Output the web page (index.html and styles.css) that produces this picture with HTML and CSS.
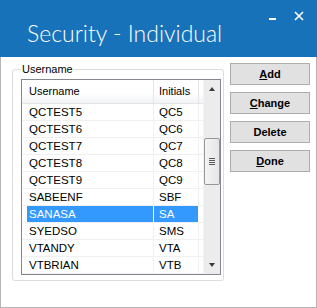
FILE: index.html
```html
<!DOCTYPE html>
<html lang="en">
<head>
    <meta charset="UTF-8">
    <title>Security - Individual</title>
    <link rel="stylesheet" href="styles.css">
</head>
<body>
    <div class="window">
        <div class="titlebar">
            <div class="title">Security - Individual</div>
            <div class="controls">
                <span class="minimize"></span>
                <svg class="close" width="10" height="10" viewBox="0 0 10 10">
                    <path d="M1 1 L9 9 M9 1 L1 9" stroke="#fff" stroke-width="1.6" fill="none"/>
                </svg>
            </div>
        </div>

        <div class="main">
            <fieldset class="group">
                <legend>Username</legend>
                <div class="listview">
                    <div class="list">
                        <div class="row header">
                            <div class="cell">Username</div>
                            <div class="cell">Initials</div>
                        </div>
                        <div class="row"><div class="cell">QCTEST5</div><div class="cell">QC5</div></div>
                        <div class="row"><div class="cell">QCTEST6</div><div class="cell">QC6</div></div>
                        <div class="row"><div class="cell">QCTEST7</div><div class="cell">QC7</div></div>
                        <div class="row"><div class="cell">QCTEST8</div><div class="cell">QC8</div></div>
                        <div class="row"><div class="cell">QCTEST9</div><div class="cell">QC9</div></div>
                        <div class="row"><div class="cell">SABEENF</div><div class="cell">SBF</div></div>
                        <div class="row selected"><div class="cell">SANASA</div><div class="cell">SA</div></div>
                        <div class="row"><div class="cell">SYEDSO</div><div class="cell">SMS</div></div>
                        <div class="row"><div class="cell">VTANDY</div><div class="cell">VTA</div></div>
                        <div class="row"><div class="cell">VTBRIAN</div><div class="cell">VTB</div></div>
                    </div>
                    <div class="scrollbar">
                        <span class="arrow up"></span>
                        <div class="track">
                            <div class="thumb"><span class="grip"></span></div>
                        </div>
                        <span class="arrow down"></span>
                    </div>
                </div>
            </fieldset>

            <div class="buttons">
                <button><u>A</u>dd</button>
                <button><u>C</u>hange</button>
                <button>Delete</button>
                <button><u>D</u>one</button>
            </div>
        </div>
    </div>
</body>
</html>
```

FILE: styles.css
```css
* {
    margin: 0;
    padding: 0;
    box-sizing: border-box;
}

body {
    font-family: "Liberation Sans", Arial, sans-serif;
    background: #fff;
}

.window {
    width: 317px;
    height: 308px;
}

.titlebar {
    height: 57px;
    background: #1872ba;
    display: flex;
    align-items: flex-start;
}

.title {
    font-family: Lato, "Open Sans", sans-serif;
    font-weight: 300;
    font-size: 23px;
    line-height: 30px;
    color: #fff;
    padding: 18px 0 0 27px;
}

.controls {
    margin-left: auto;
    display: flex;
    align-items: flex-start;
    padding: 11px 13px 0 0;
}

.minimize {
    width: 7px;
    height: 2px;
    background: #fff;
    margin: 7px 18px 0 0;
}

.main {
    height: 251px;
    border: 1px solid #b4b4b4;
    border-top: 0;
    display: flex;
    align-items: flex-start;
    padding: 5px 0 0 11px;
}

.group {
    width: 212px;
    border: 1px solid #dcdcdc;
    border-radius: 3px;
    padding: 3px 2px 5px 8px;
}

.group legend {
    font-size: 11px;
    line-height: 14px;
    padding: 0 1px;
    color: #000;
}

.listview {
    width: 200px;
    height: 196px;
    border: 1px solid #828790;
    display: flex;
}

.list {
    flex: 1;
    overflow: hidden;
}

.row {
    display: grid;
    grid-template-columns: 132px 45px;
    height: 17px;
    border-bottom: 1px solid #f0f0f0;
    font-size: 11.5px;
    line-height: 16px;
    color: #000;
}

.row .cell {
    padding-left: 7px;
    border-right: 1px solid #f0f0f0;
    white-space: nowrap;
}

.row .cell:last-child {
    padding-left: 5px;
}

.header {
    height: 24px;
    line-height: 23px;
    font-size: 11px;
    background: linear-gradient(#fff 0, #fff 55%, #f3f4f6 100%);
    border-bottom: 1px solid #e5e5e5;
}

.header .cell {
    border-right: 1px solid #e3e5e8;
}

.selected .cell {
    background: #3399ff;
    color: #fff;
    border-right-color: #fff;
}

.selected .cell:first-child {
    margin-left: 5px;
    padding-left: 2px;
}

.scrollbar {
    width: 17px;
    background: #ececec;
    border-left: 1px solid #f3f3f3;
    display: flex;
    flex-direction: column;
    align-items: center;
}

.arrow {
    width: 0;
    height: 0;
    border-left: 3.5px solid transparent;
    border-right: 3.5px solid transparent;
    margin: 7px 0;
}

.arrow.up {
    border-bottom: 4px solid #3c3c3c;
}

.arrow.down {
    border-top: 4px solid #3c3c3c;
}

.track {
    flex: 1;
    width: 100%;
    padding-top: 40px;
}

.thumb {
    height: 47px;
    width: 16px;
    border: 1px solid #979797;
    border-radius: 2px;
    background: linear-gradient(90deg, #f4f4f4, #e6e6e6);
    display: flex;
    align-items: center;
    justify-content: center;
}

.grip {
    width: 6px;
    height: 7px;
    background: repeating-linear-gradient(#5a5a5a 0 1px, transparent 1px 2px);
}

.buttons {
    display: flex;
    flex-direction: column;
    gap: 7px;
    margin: 1px 0 0 6px;
}

.buttons button {
    width: 80px;
    height: 22px;
    background: #e1e1e1;
    border: 1px solid #adadad;
    font-family: "Liberation Sans", Arial, sans-serif;
    font-weight: bold;
    font-size: 11px;
    color: #000;
}
```
